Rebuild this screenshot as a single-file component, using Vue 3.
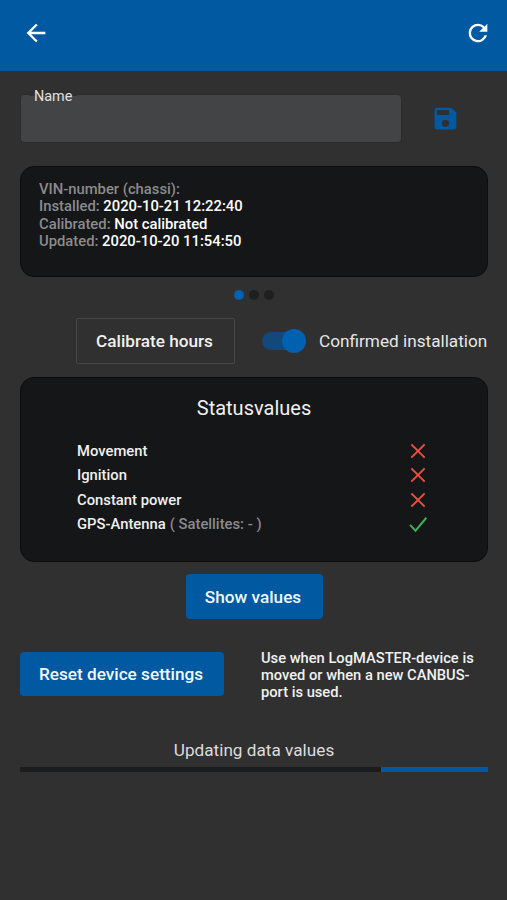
<template>
  <div class="page">
    <header class="toolbar">
      <svg class="bar-icon" viewBox="0 0 24 24"><path d="M20 11H7.83l5.59-5.59L12 4l-8 8 8 8 1.41-1.41L7.83 13H20v-2z" /></svg>
      <svg class="bar-icon" viewBox="0 0 24 24"><path d="M17.65 6.35A7.96 7.96 0 0 0 12 4a8 8 0 1 0 7.73 10h-2.08A6 6 0 1 1 12 6c1.66 0 3.14.69 4.22 1.78L13 11h7V4l-2.35 2.35z" /></svg>
    </header>

    <main class="content">
      <div class="name-row">
        <div class="name-field">
          <span class="name-label">Name</span>
        </div>
        <svg class="save-icon" viewBox="0 0 24 24"><path d="M17 3H5a2 2 0 0 0-2 2v14a2 2 0 0 0 2 2h14a2 2 0 0 0 2-2V7l-4-4zm-5 16a3 3 0 1 1 0-6 3 3 0 0 1 0 6zm3-10H5V5h10v4z" /></svg>
      </div>

      <section class="card info-card">
        <div v-for="row in infoRows" :key="row.label">
          <span class="muted">{{ row.label }}</span> <span class="value">{{ row.value }}</span>
        </div>
      </section>

      <div class="dots">
        <span class="dot active"></span>
        <span class="dot"></span>
        <span class="dot"></span>
      </div>

      <div class="calibrate-row">
        <button class="btn-outline">Calibrate hours</button>
        <div class="toggle">
          <span class="toggle-track"></span>
          <span class="toggle-thumb"></span>
        </div>
        <span class="toggle-label">Confirmed installation</span>
      </div>

      <section class="card status-card">
        <h2>Statusvalues</h2>
        <div class="status-list">
          <div v-for="item in statusItems" :key="item.name" class="status-row">
            <span class="status-name">{{ item.name }}<span v-if="item.note" class="muted note">{{ item.note }}</span></span>
            <svg v-if="item.ok" class="status-icon" viewBox="0 0 24 24"><path class="ok" d="M2.5 13l6.5 7L22 4.5" /></svg>
            <svg v-else class="status-icon" viewBox="0 0 24 24"><path class="bad" d="M4 4l16 16M20 4L4 20" /></svg>
          </div>
        </div>
      </section>

      <div class="show-row">
        <button class="btn-primary show-btn">Show values</button>
      </div>

      <div class="reset-row">
        <button class="btn-primary reset-btn">Reset device settings</button>
        <p class="reset-hint">Use when LogMASTER-device is moved or when a new CANBUS-port is used.</p>
      </div>

      <div class="progress-title">Updating data values</div>
      <div class="progress">
        <div class="progress-fill" :style="{ width: progress + '%' }"></div>
      </div>
    </main>
  </div>
</template>

<script setup>
const infoRows = [
  { label: 'VIN-number (chassi):', value: '' },
  { label: 'Installed:', value: '2020-10-21 12:22:40' },
  { label: 'Calibrated:', value: 'Not calibrated' },
  { label: 'Updated:', value: '2020-10-20 11:54:50' }
]

const statusItems = [
  { name: 'Movement', ok: false },
  { name: 'Ignition', ok: false },
  { name: 'Constant power', ok: false },
  { name: 'GPS-Antenna', note: '( Satellites: - )', ok: true }
]

const progress = 22.9
</script>

<style>
html, body {
  margin: 0;
  background: #303030;
}
</style>

<style scoped>
.page {
  height: 900px;
  overflow: hidden;
  background: #303030;
  font-family: Roboto, "Liberation Sans", sans-serif;
  color: #fff;
}

.toolbar {
  height: 71px;
  box-sizing: border-box;
  padding: 0 15px 5px 22px;
  background: #0059a1;
  display: flex;
  align-items: center;
  justify-content: space-between;
}

.bar-icon {
  width: 28px;
  height: 28px;
  fill: #fff;
}

.content {
  padding: 23px 19px 0 20px;
}

.name-row {
  display: flex;
  align-items: center;
}

.name-field {
  position: relative;
  width: 382px;
  height: 49px;
  box-sizing: border-box;
  background: #434445;
  border: 1px solid #2b2b2b;
  border-radius: 4px;
}

/* the label sits in a notch cut out of the field's top border */
.name-label {
  position: absolute;
  left: 8px;
  top: -6px;
  padding: 0 5px;
  background: linear-gradient(#303030 7px, transparent 7px);
  color: #e0e0e0;
  font-size: 14.4px;
  line-height: 16px;
}

.save-icon {
  width: 29px;
  height: 29px;
  margin-left: 29px;
  fill: #0059a1;
}

.card {
  background: #151618;
  border: 1px solid #0c0c0c;
  border-radius: 14px;
  box-sizing: border-box;
}

.info-card {
  margin-top: 23px;
  height: 111px;
  padding: 14px 18px;
  font-size: 14.8px;
  font-weight: 500;
  line-height: 17.4px;
}

.muted {
  color: #8a8b8c;
}

.value {
  color: #fff;
}

.dots {
  display: flex;
  justify-content: center;
  gap: 5px;
  margin-top: 13px;
}

.dot {
  width: 10px;
  height: 10px;
  border-radius: 50%;
  background: #1e1f20;
}

.dot.active {
  background: #0061b0;
}

.calibrate-row {
  display: flex;
  align-items: center;
  margin-top: 18px;
  padding-left: 56px;
  height: 46px;
}

.btn-outline {
  width: 159px;
  height: 46px;
  padding: 0 8px 0 6px;
  background: transparent;
  border: 1px solid #484848;
  border-radius: 2px;
  color: #f0f0f0;
  font-family: inherit;
  font-size: 17.2px;
  font-weight: 500;
}

.toggle {
  position: relative;
  width: 44px;
  height: 24px;
  margin-left: 27px;
}

.toggle-track {
  position: absolute;
  left: 0;
  top: 3px;
  width: 40px;
  height: 18px;
  border-radius: 9px;
  background: #12497a;
}

.toggle-thumb {
  position: absolute;
  right: 0;
  top: 0;
  width: 24px;
  height: 24px;
  border-radius: 50%;
  background: #0061b0;
}

.toggle-label {
  margin-left: 13px;
  font-size: 17.2px;
  color: #e6e6e6;
  white-space: nowrap;
}

.status-card {
  margin-top: 13px;
  height: 185px;
  padding-top: 18px;
}

.status-card h2 {
  margin: 0;
  text-align: center;
  font-size: 20px;
  font-weight: 400;
  line-height: 24px;
  color: #f0f0f0;
}

.status-list {
  margin-top: 18.5px;
  padding: 0 59px 0 56px;
}

.status-row {
  display: flex;
  align-items: center;
  justify-content: space-between;
  height: 24.5px;
  font-size: 14.8px;
  font-weight: 500;
  color: #f0f0f0;
}

.note {
  margin-left: 4px;
}

.status-icon {
  width: 20px;
  height: 20px;
  fill: none;
  stroke-width: 2.4;
}

.bad {
  stroke: #e8503f;
}

.ok {
  stroke: #3fae55;
}

.show-row {
  display: flex;
  justify-content: center;
  margin-top: 12px;
}

.btn-primary {
  border: none;
  border-radius: 4px;
  padding: 0 8px 0 6px;
  background: #0059a1;
  color: #f4f8fb;
  font-family: inherit;
  font-size: 17.2px;
  font-weight: 500;
}

.show-btn {
  width: 137px;
  height: 45px;
}

.reset-row {
  display: flex;
  align-items: center;
  margin-top: 31px;
}

.reset-btn {
  flex: none;
  width: 204px;
  height: 44px;
  margin-bottom: 4px;
}

.reset-hint {
  width: 222px;
  margin: 0 0 0 37px;
  font-size: 14.7px;
  font-weight: 500;
  line-height: 17px;
  color: #f0f0f0;
}

.progress-title {
  margin-top: 39px;
  text-align: center;
  font-size: 17.2px;
  line-height: 20px;
  color: #dcdcdc;
}

.progress {
  height: 5px;
  margin-top: 7px;
  background: #1b1c1e;
  display: flex;
  justify-content: flex-end;
}

.progress-fill {
  height: 100%;
  background: #0059a1;
}
</style>
